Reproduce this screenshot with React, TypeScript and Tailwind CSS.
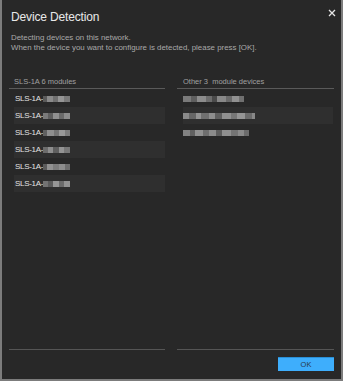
import React from "react";

const font = { fontFamily: '"Liberation Sans", Arial, sans-serif' };

function Mosaic({ segs }: { segs: [number, string][] }) {
  return (
    <div className="flex h-[6px] items-stretch blur-[0.3px]">
      {segs.map(([w, c], i) => (
        <div key={i} style={{ width: w, backgroundColor: c }} />
      ))}
    </div>
  );
}

const leftRows: [number, string][][] = [
  [[4, "#5a5a5a"], [6, "#8a8a8a"], [5, "#6f6f6f"], [6, "#959595"], [6, "#7a7a7a"]],
  [[5, "#7a7a7a"], [5, "#5e5e5e"], [6, "#909090"], [5, "#6a6a6a"], [6, "#8c8c8c"]],
  [[4, "#606060"], [7, "#8f8f8f"], [5, "#757575"], [6, "#999999"], [5, "#7d7d7d"]],
  [[5, "#6c6c6c"], [5, "#8e8e8e"], [6, "#5f5f5f"], [5, "#939393"], [6, "#787878"]],
  [[4, "#5c5c5c"], [6, "#919191"], [6, "#7c7c7c"], [6, "#8d8d8d"], [5, "#6e6e6e"]],
  [[5, "#737373"], [5, "#5b5b5b"], [6, "#969696"], [5, "#6b6b6b"], [6, "#929292"]],
];

const rightRows: [number, string][][] = [
  [[8, "#7a7a7a"], [6, "#5e5e5e"], [9, "#8c8c8c"], [6, "#6d6d6d"], [5, "#4a4a4a"], [9, "#888888"], [6, "#6a6a6a"], [7, "#919191"], [5, "#707070"]],
  [[6, "#8a8a8a"], [7, "#666666"], [5, "#939393"], [8, "#707070"], [6, "#8e8e8e"], [7, "#5f5f5f"], [9, "#909090"], [6, "#777777"], [8, "#959595"], [7, "#6b6b6b"], [3, "#888888"]],
  [[7, "#828282"], [5, "#606060"], [8, "#909090"], [6, "#6e6e6e"], [7, "#8b8b8b"], [6, "#5d5d5d"], [9, "#8f8f8f"], [7, "#747474"], [6, "#8a8a8a"], [5, "#6c6c6c"]],
];

export default function App() {
  return (
    <div
      className="w-[343px] h-[381px] bg-[#7c7c7c] px-[2px] pb-[2px] flex"
      style={font}
    >
      <div className="flex-1 bg-[#282828] flex flex-col relative">
        <div className="absolute right-[5px] top-[9px] text-[#e6e6e6]">
          <svg width="8" height="8" viewBox="0 0 8 8">
            <path d="M1 1 L7 7 M7 1 L1 7" stroke="currentColor" strokeWidth="1.3" />
          </svg>
        </div>
        <div className="pl-[9px] pt-[10px] text-[12px] leading-[14px] text-[#e8e8e8] tracking-[-0.15px]">
          Device Detection
        </div>
        <div className="pl-[9px] pt-[9px] text-[7.9px] leading-[9.7px] text-[#a8a8a8]">
          <div>Detecting devices on this network.</div>
          <div>When the device you want to configure is detected, please press [OK].</div>
        </div>
        <div className="flex flex-1 px-[7px] gap-[12px] pt-[25px]">
          <div className="w-[156px] flex flex-col">
            <div className="pl-[5px] text-[7.5px] leading-[9px] text-[#a0a0a0] pb-[2px]">
              SLS-1A 6 modules
            </div>
            <div className="h-px bg-[#5a5a5a] mb-[1px]" />
            {leftRows.map((segs, i) => (
              <div
                key={i}
                className={`ml-[5px] h-[17px] pl-[1px] flex items-center ${
                  i % 2 === 1 ? "bg-[#2f2f2f]" : ""
                }`}
              >
                <span className="text-[8px] text-[#e2e2e2] tracking-[-0.3px]">SLS-1A-</span>
                <Mosaic segs={segs} />
              </div>
            ))}
            <div className="flex-1" />
            <div className="h-px bg-[#555555]" />
          </div>
          <div className="w-[157px] flex flex-col">
            <div className="pl-[6px] text-[7.5px] leading-[9px] text-[#a0a0a0] pb-[2px] whitespace-pre">
              Other 3  module devices
            </div>
            <div className="h-px bg-[#5a5a5a] mb-[1px]" />
            {rightRows.map((segs, i) => (
              <div
                key={i}
                className={`ml-[6px] mr-[1px] h-[17px] flex items-center ${
                  i % 2 === 1 ? "bg-[#2f2f2f]" : ""
                }`}
              >
                <Mosaic segs={segs} />
              </div>
            ))}
            <div className="flex-1" />
            <div className="h-px bg-[#555555]" />
          </div>
        </div>
        <div className="flex justify-end pr-[7px] pt-[7px] pb-[8px]">
          <button className="w-[56px] h-[14px] bg-[#3eaefc] border-t border-[#2a8fd6] text-[7.5px] leading-none text-[#2a3a48]">
            OK
          </button>
        </div>
      </div>
    </div>
  );
}
